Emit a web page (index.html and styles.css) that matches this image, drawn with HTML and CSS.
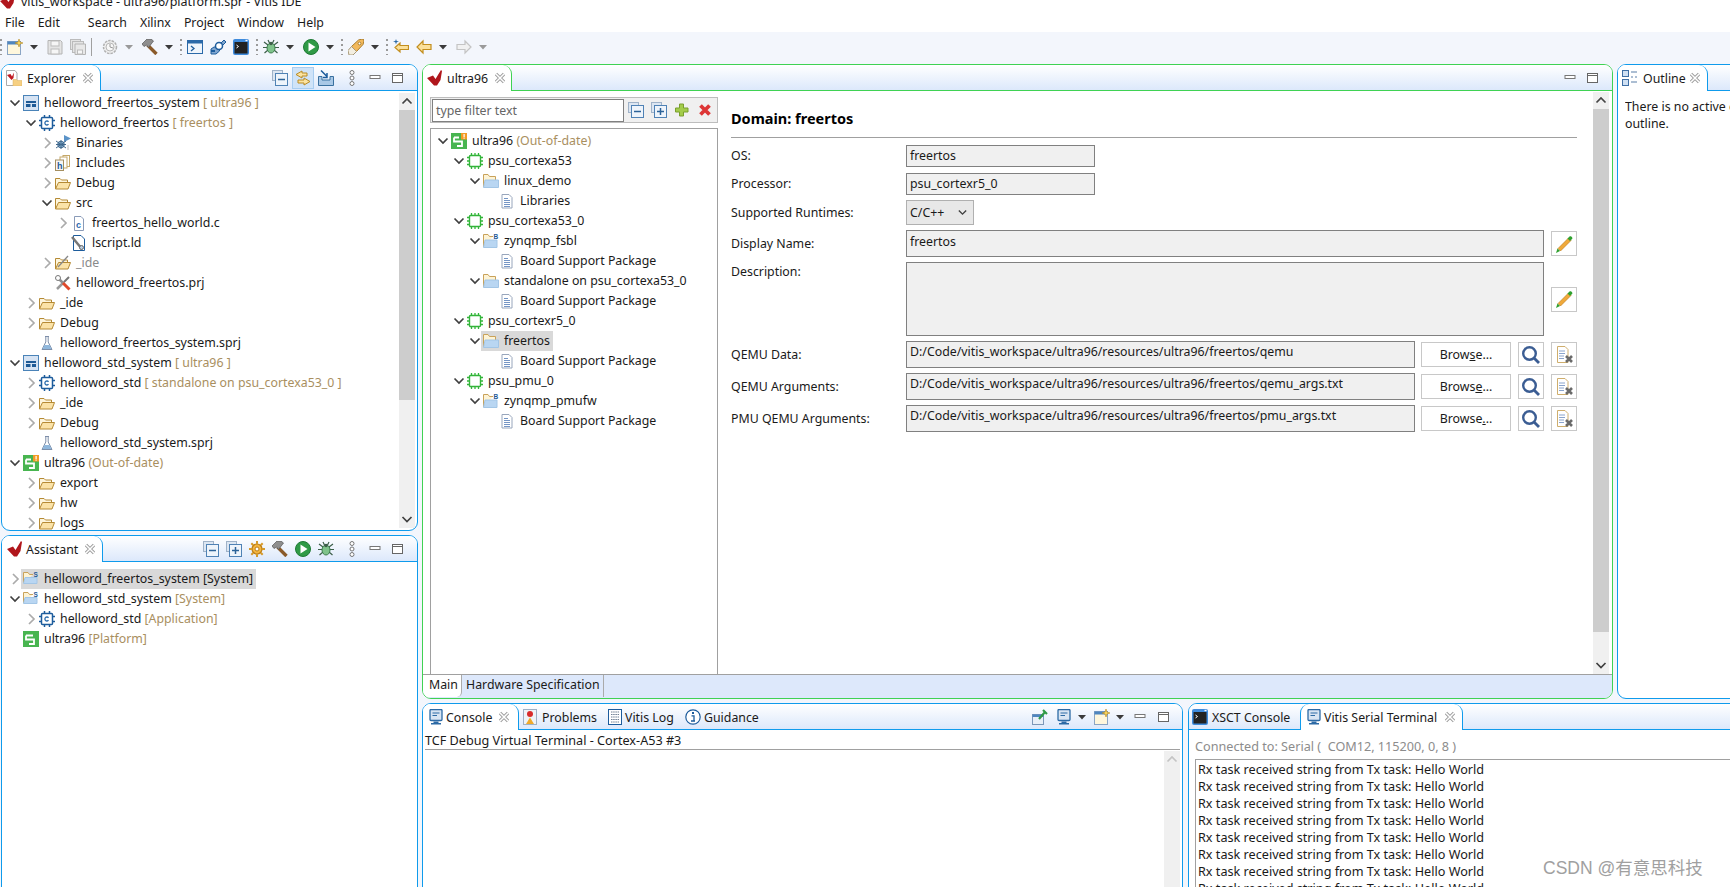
FILE: index.html
```html
<!DOCTYPE html>
<html lang="en">
<head>
<meta charset="utf-8">
<title>vitis_workspace - ultra96/platform.spr - Vitis IDE</title>
<link rel="stylesheet" href="styles.css">
</head>
<body>
<svg class="defs" xmlns="http://www.w3.org/2000/svg">
  <symbol id="logo" viewBox="0 0 16 16"><path d="M0 8 6 5.500 8.500 9 14 0 15 1 13.500 10 10 15.500 7 15.500Z" fill="#b0161c"/></symbol>
  <symbol id="cd" viewBox="0 0 16 16"><path d="M3.500 5.500 8 10 12.500 5.500" fill="none" stroke="#404040" stroke-width="1.700"/></symbol>
  <symbol id="cr" viewBox="0 0 16 16"><path d="M6 3 11 8 6 13" fill="none" stroke="#ababab" stroke-width="1.700"/></symbol>
  <symbol id="sys" viewBox="0 0 16 16"><rect x=".5" y=".5" width="15" height="15" fill="#d6e3f3" stroke="#4a83b8"/><rect x="3" y="6" width="10" height="2" fill="#1e5a96"/><rect x="3" y="9" width="4.500" height="3" fill="#1e5a96"/><rect x="9" y="9" width="4" height="3" fill="#1e5a96"/></symbol>
  <symbol id="app" viewBox="0 0 16 16"><rect x="2.500" y="2.500" width="11" height="11" rx="1" fill="#fff" stroke="#1d5c9c" stroke-width="1.500"/><path d="M5.500 0v3M10.500 0v3M5.500 13v3M10.500 13v3M0 5.500h3M0 10.500h3M13 5.500h3M13 10.500h3" stroke="#1d5c9c" stroke-width="1.500"/><path d="M9.500 6.800A2 2 0 1 0 9.500 9.200" fill="none" stroke="#2f6fae" stroke-width="1.300"/></symbol>
  <symbol id="bin" viewBox="0 0 16 16"><path d="M9 0 16 3.500 9 7Z" fill="#5b93c8"/><circle cx="6" cy="9.500" r="3.300" fill="#8fb7d8" stroke="#41688c"/><path d="M1 6 11 13M1 13 11 6M1 9.500h10M6 5v9" stroke="#41688c"/><path d="M13 10v5" stroke="#bbb"/></symbol>
  <symbol id="inc" viewBox="0 0 16 16"><rect x="8" y=".5" width="6.500" height="11" fill="#fff" stroke="#c5a869"/><rect x="5" y="2" width="7" height="11" fill="#fff" stroke="#c5a869"/><rect x=".5" y="5" width="8" height="10.500" fill="#f6f6f6" stroke="#a58f60"/><text x="2" y="14" font-size="9" font-weight="700" font-family="Liberation Sans" fill="#1e5a96">h</text></symbol>
  <symbol id="fo" viewBox="0 0 16 16"><path d="M.5 14V3.500H5L6.500 5H12.500V7.500" fill="#fdf5dc" stroke="#b58a35"/><path d="M.5 14 3.500 7.500H15.500L13 14Z" fill="#fbe3a8" stroke="#b58a35"/></symbol>
  <symbol id="fx" viewBox="0 0 16 16"><path d="M.5 14V3.500H5L6.500 5H12.500V7.500" fill="#fdf5dc" stroke="#b58a35"/><path d="M.5 14 3.500 7.500H15.500L13 14Z" fill="#fbe3a8" stroke="#b58a35"/><path d="M3 12 13 1" stroke="#888" stroke-width="1.300"/></symbol>
  <symbol id="fb" viewBox="0 0 16 16"><path d="M.5 14V1.500H5L6.500 3.500H12.500V7" fill="#fdf3d5" stroke="#c9a25a"/><path d="M.5 14.500 2 7H15.500V14.500Z" fill="#b9d6f2" stroke="#a3c6e6"/></symbol>
  <symbol id="fbb" viewBox="0 0 16 16"><path d="M.5 14V1.500H5L6.500 3.500H10" fill="#fdf3d5" stroke="#c9a25a"/><path d="M.5 14.500 2 7H14V14.500Z" fill="#b9d6f2" stroke="#a3c6e6"/><text x="10.500" y="6" font-size="6.500" font-weight="700" font-family="Liberation Sans" fill="#1e5a96">B</text></symbol>
  <symbol id="fbs" viewBox="0 0 16 16"><path d="M.5 12V1.500H5L6.500 3.500H10" fill="#fdf3d5" stroke="#c9a25a"/><path d="M.5 12.500 2 6.500H14V12.500Z" fill="#b9d6f2" stroke="#a3c6e6"/><text x="10.500" y="6" font-size="6.500" font-weight="700" font-family="Liberation Sans" fill="#1e5a96">S</text></symbol>
  <symbol id="cfile" viewBox="0 0 16 16"><path d="M3.500 1.500H10L12.500 4V15.500H3.500Z" fill="#fff" stroke="#8a9bb8"/><text x="5" y="13" font-size="9" font-weight="700" font-family="Liberation Sans" fill="#2b6bb0">c</text></symbol>
  <symbol id="ld" viewBox="0 0 16 16"><path d="M2.500 .5H10L13.500 4V15.500H2.500Z" fill="#fff" stroke="#1d5c9c"/><path d="M1 2 11 14" stroke="#777" stroke-width="2.500"/><circle cx="10.500" cy="12.500" r="2" fill="#bcd" stroke="#666"/></symbol>
  <symbol id="prj" viewBox="0 0 16 16"><path d="M2 14 9 7" stroke="#9a9a9a" stroke-width="2.500"/><path d="M9 7 14 2" stroke="#777" stroke-width="2"/><path d="M2 2 8 8" stroke="#8f8f8f" stroke-width="2.500"/><circle cx="3" cy="3" r="2.500" fill="#fff" stroke="#777"/><path d="M8 8 14.500 14.500" stroke="#e0492a" stroke-width="3"/></symbol>
  <symbol id="flask" viewBox="0 0 16 16"><path d="M6 1.500H10M6.800 1.500V7L3 14.500H13L9.200 7V1.500" fill="#fff" stroke="#7d8ea8"/><path d="M5.500 10H10.500L12.500 14H3.500Z" fill="#8fb7dc"/></symbol>
  <symbol id="plat" viewBox="0 0 16 16"><rect width="16" height="16" fill="#48b550"/><path d="M3 4.500H10M3 4.500V8.500H11V13H6" fill="none" stroke="#fff" stroke-width="1.800"/></symbol>
  <symbol id="platw" viewBox="0 0 16 16"><rect width="16" height="16" fill="#48b550"/><path d="M3 4.500H8M3 4.500V8.500H11V13H6" fill="none" stroke="#fff" stroke-width="1.800"/><rect x="10" y="0" width="6" height="6.500" fill="#f39a25"/><rect x="12.500" y="1" width="1.200" height="3" fill="#fff"/><rect x="12.500" y="4.500" width="1.200" height="1.200" fill="#fff"/></symbol>
  <symbol id="cpu" viewBox="0 0 16 16"><rect x="2.500" y="2.500" width="11" height="11" rx="1" fill="#fff" stroke="#33b53a" stroke-width="1.400"/><path d="M4.500 0v2.500M8 0v2.500M11.500 0v2.500M4.500 13.500V16M8 13.500V16M11.500 13.500V16M0 4.500h2.500M0 8h2.500M0 11.500h2.500M13.500 4.500H16M13.500 8H16M13.500 11.500H16" stroke="#33b53a" stroke-width="1.300"/></symbol>
  <symbol id="doc" viewBox="0 0 16 16"><path d="M3 1.500H10L13 4.500V15H3Z" fill="#fff" stroke="#98a6bc"/><path d="M5 5.500H9M5 7.500H11M5 9.500H11M5 11.500H11M5 13.500H11" stroke="#7595c4"/></symbol>
  <symbol id="x" viewBox="0 0 12 12"><path d="M2 2 10 10M10 2 2 10" stroke="#9d9d9d" stroke-width="3.200"/><path d="M2 2 10 10M10 2 2 10" stroke="#fff" stroke-width="1.500"/></symbol>
  <symbol id="exp" viewBox="0 0 16 16"><path d="M.5 .5H9L11 3V15.500H.5Z" fill="#fff" stroke="#aaa"/><path d="M1 5 4.500 4 6 6.500 8 2.500 7.500 8 5.500 10Z" fill="#c01a20"/><path d="M7 9.500H10.500L11.500 10.500H16V16H7Z" fill="#f6d083" stroke="#d9b162" stroke-width=".5"/></symbol>
  <symbol id="col" viewBox="0 0 16 16"><rect x=".5" y=".5" width="10" height="10" fill="#dce6f2" stroke="#9fb2c8"/><rect x="3.500" y="3.500" width="12" height="12" fill="#eef4fb" stroke="#4f82b5"/><path d="M6 9.500H13" stroke="#2c6399" stroke-width="1.500"/></symbol>
  <symbol id="ex" viewBox="0 0 16 16"><rect x=".5" y=".5" width="10" height="10" fill="#dce6f2" stroke="#9fb2c8"/><rect x="3.500" y="3.500" width="12" height="12" fill="#eef4fb" stroke="#4f82b5"/><path d="M6 9.500H13M9.500 6V13" stroke="#2c6399" stroke-width="1.500"/></symbol>
  <symbol id="link" viewBox="0 0 16 16"><path d="M7 1 1 4.500 7 8V6H12V3H7Z" fill="#fbe3a0" stroke="#b98a22"/><path d="M9 8 15 11.500 9 15V13H3V10H9Z" fill="#fbe3a0" stroke="#b98a22"/></symbol>
  <symbol id="tray" viewBox="0 0 16 16"><path d="M.5 6.500V15.500H15.500V6.500H12V10H4V6.500Z" fill="#a9c8e6" stroke="#39709f"/><path d="M3 .5 9 6.500M9 3V7.500H5" fill="none" stroke="#1d5c9c" stroke-width="1.500"/></symbol>
  <symbol id="dots" viewBox="0 0 16 16"><circle cx="8" cy="2.500" r="2" fill="#fff" stroke="#777"/><circle cx="8" cy="8" r="2" fill="#fff" stroke="#777"/><circle cx="8" cy="13.500" r="2" fill="#fff" stroke="#777"/></symbol>
  <symbol id="min" viewBox="0 0 16 16"><rect x="3" y="5.500" width="10" height="3" fill="#fff" stroke="#777"/></symbol>
  <symbol id="max" viewBox="0 0 16 16"><rect x="2.500" y="3.500" width="10" height="9" fill="#fff" stroke="#666"/><path d="M2.500 5.500H12.500" stroke="#666"/></symbol>
  <symbol id="gear" viewBox="0 0 16 16"><circle cx="8" cy="8" r="5" fill="#f5b63f" stroke="#b97c17" stroke-width="1.200"/><circle cx="8" cy="8" r="2" fill="#fff" stroke="#b97c17"/><path d="M8 0v3M8 13v3M0 8h3M13 8h3M2.300 2.300l2 2M11.700 11.700l2 2M2.300 13.700l2-2M11.700 4.300l2-2" stroke="#d69a2b" stroke-width="2"/></symbol>
  <symbol id="hammer" viewBox="0 0 16 16"><path d="M5.500 6 14.500 15" stroke="#8a5a2a" stroke-width="3.400"/><path d="M0 5 5 0H9L11.500 2 6.500 8.500 4.500 6 2 7.500Z" fill="#8e8e8e" stroke="#555" stroke-width=".7"/></symbol>
  <symbol id="run" viewBox="0 0 16 16"><circle cx="8" cy="8" r="7.500" fill="#2f9a46" stroke="#1f7a35"/><path d="M5.500 3.500 12.500 8 5.500 12.500Z" fill="#fff"/></symbol>
  <symbol id="bug" viewBox="0 0 16 16"><path d="M1 3 5 6M15 3 11 6M0 8.500H4M16 8.500H12M1.500 14 5 11M14.500 14 11 11M5 1 6.500 4M11 1 9.500 4" stroke="#3d5f4a" stroke-width="1.200"/><ellipse cx="8" cy="9" rx="4" ry="5" fill="#7fc38b" stroke="#3a7a4a"/><circle cx="8" cy="4.500" r="1.800" fill="#3d5f4a"/></symbol>
  <symbol id="plus" viewBox="0 0 16 16"><path d="M5.500 2H9.500V6H14V10H9.500V14H5.500V10H1.500V6H5.500Z" fill="#a3cc4a" stroke="#7a9f2e"/></symbol>
  <symbol id="del" viewBox="0 0 16 16"><path d="M3.500 3.500 12.500 12.500M12.500 3.500 3.500 12.500" stroke="#dd3636" stroke-width="3.800"/></symbol>
  <symbol id="pencil" viewBox="0 0 20 20"><path d="M4 14.500 14.500 4 17 6.500 6.500 17Z" fill="#f0a93a" stroke="#b9751a" stroke-width=".6"/><path d="M13.500 4.500 15.500 2.500C16 2 16.700 2 17.300 2.500L18 3.200C18.500 3.800 18.500 4.500 18 5L16 7Z" fill="#2fa12f"/><path d="M2 19 3.500 14.500 6 17Z" fill="#2fa12f"/></symbol>
  <symbol id="mag" viewBox="0 0 20 20"><circle cx="8.500" cy="8.500" r="6.300" fill="#fff" stroke="#3b5d93" stroke-width="2.400"/><path d="M13 13 18 18" stroke="#3b5d93" stroke-width="2.800"/></symbol>
  <symbol id="clr" viewBox="0 0 20 20"><path d="M3.500 1.500H11L14 4.500V17.500H3.500Z" fill="#fff" stroke="#cfae6d"/><path d="M5 6H11M5 8.500H11M5 11H10M5 13.500H10" stroke="#8aa4cc"/><path d="M12 11 18 17M18 11 12 17" stroke="#6a6a6a" stroke-width="2.600"/></symbol>
  <symbol id="outl" viewBox="0 0 16 16"><rect x=".5" y=".5" width="6" height="6" fill="#cfe0f3" stroke="#3f6fa5"/><rect x=".5" y="9.500" width="6" height="6" fill="#cfe0f3" stroke="#3f6fa5"/><path d="M9 2H15M9 7H11M13 7H15M9 12H15" stroke="#5a7ea8" stroke-width="1.200"/></symbol>
  <symbol id="mon" viewBox="0 0 16 16"><rect x="2" y=".5" width="12" height="11" rx="1" fill="#d8e5f3" stroke="#2c6aa5" stroke-width="1.300"/><path d="M4.500 4H11.500M4.500 6.500H9" stroke="#2c6aa5"/><path d="M5.500 12.500H10.500V14H13V15.500H3V14H5.500Z" fill="#2c6aa5"/></symbol>
  <symbol id="prob" viewBox="0 0 16 16"><rect x="1.500" y=".5" width="13" height="15" fill="#eef2f7" stroke="#9fb0c4"/><circle cx="8" cy="5" r="3" fill="#d82b2b"/><path d="M8 8.500 12 15H4Z" fill="#f0a92a"/></symbol>
  <symbol id="log" viewBox="0 0 16 16"><rect x="1.500" y=".5" width="13" height="15" fill="#fff" stroke="#1d5c9c"/><path d="M4 3H12M4 5.500H12M4 8H12M4 10.500H12M4 13H12" stroke="#6f7f92" stroke-dasharray="1.500 .7"/></symbol>
  <symbol id="info" viewBox="0 0 16 16"><circle cx="8" cy="8" r="7.200" fill="#fff" stroke="#1d5c9c" stroke-width="1.200"/><rect x="7" y="3" width="2" height="2" fill="#1d5c9c"/><path d="M6.500 6.800H9V12H10M6 12H10" fill="none" stroke="#1d5c9c" stroke-width="1.300"/></symbol>
  <symbol id="pin" viewBox="0 0 16 16"><rect x=".5" y="5.500" width="11" height="10" fill="#e8eff8" stroke="#7c97b8"/><rect x=".5" y="5.500" width="11" height="2.500" fill="#4f86bf"/><path d="M7 10 13 3M11 1 15 5" stroke="#2f9a46" stroke-width="2.200"/></symbol>
  <symbol id="new" viewBox="0 0 16 16"><rect x=".5" y="2.500" width="13" height="13" fill="#fff7dc" stroke="#8ba5c4"/><rect x=".5" y="2.500" width="13" height="3" fill="#4f86bf"/><path d="M12 0 13 3 16 4 13 5 12 8 11 5 8 4 11 3Z" fill="#f7d25a" stroke="#b58a22" stroke-width=".6"/></symbol>
  <symbol id="save" viewBox="0 0 16 16"><path d="M1 1.500H13.500L15 3V15H1Z" fill="#e4e4e4" stroke="#b4b4b4"/><rect x="4" y="2" width="8" height="5" fill="#f6f6f6" stroke="#bbb"/><rect x="4" y="10" width="8" height="5" fill="#f6f6f6" stroke="#bbb"/></symbol>
  <symbol id="saveall" viewBox="0 0 16 16"><rect x=".5" y=".5" width="10" height="10" fill="#e4e4e4" stroke="#bbb"/><rect x="2.500" y="2.500" width="11" height="11" fill="#e4e4e4" stroke="#bbb"/><path d="M5 5H15.500V15.500H5Z" fill="#e8e8e8" stroke="#b4b4b4"/><rect x="7.500" y="11" width="5" height="4" fill="#f6f6f6" stroke="#bbb"/></symbol>
  <symbol id="gearg" viewBox="0 0 16 16"><circle cx="8" cy="8" r="6.500" fill="#eee" stroke="#b0b0b0" stroke-width="1.500" stroke-dasharray="2.500 1"/><circle cx="8" cy="8" r="4" fill="#f7f7f7" stroke="#b8b8b8"/><path d="M8 5V8L11 9" fill="none" stroke="#999"/></symbol>
  <symbol id="xs" viewBox="0 0 16 16"><rect x=".5" y="1.500" width="15" height="13" fill="#eef4fb" stroke="#2a69a8"/><rect x=".5" y="1.500" width="15" height="3" fill="#2a69a8"/><path d="M4 7 7 9.500 4 12" fill="none" stroke="#1d5c9c" stroke-width="1.300"/></symbol>
  <symbol id="conn" viewBox="0 0 16 16"><path d="M1 15V10L4 8H7L14 1 16 3 9.500 9.500V12L6 15Z" fill="#7fa5cf" stroke="#1d5c9c"/><circle cx="9" cy="7" r="3.500" fill="#fff" stroke="#1d5c9c" stroke-width="1.500"/><path d="M1 12H5" stroke="#1d5c9c" stroke-width="2"/></symbol>
  <symbol id="term" viewBox="0 0 16 16"><rect width="16" height="16" rx="2" fill="#3f8bdc"/><rect x="1.500" y="3" width="13" height="11.500" fill="#222"/><path d="M3.500 6 5.500 7.500 3.500 9" fill="none" stroke="#fff"/><rect x="12.500" y=".8" width="2" height="1.400" fill="#fff"/></symbol>
  <symbol id="rocket" viewBox="0 0 16 16"><path d="M3.500 7.500 10.500 1C12 .3 14.500 0 16 0 16 1.500 15.700 4 15 5.500L8.500 12.500Z" fill="#f2b95c" stroke="#a97c2c"/><path d="M3.500 7.500 8.500 12.500 5 16 1 16 0 11.500Z" fill="#f3eee0" stroke="#a89a7a"/><circle cx="11.500" cy="4.500" r="1.400" fill="#fff" stroke="#a97c2c"/></symbol>
  <symbol id="back" viewBox="0 0 16 16"><path d="M7 2 1 8 7 14V10.500H15V5.500H7Z" fill="#fbe09a" stroke="#c28e1e" stroke-width="1.200"/></symbol>
  <symbol id="backs" viewBox="0 0 16 16"><path d="M7 4 2 8.500 7 13V10.500H15.500V6.500H7Z" fill="#fbe09a" stroke="#c28e1e" stroke-width="1.200"/><path d="M3 0 3.700 2 6 2.500 3.700 3.200 3 5.500 2.300 3.200 0 2.500 2.300 2Z" fill="#2c6aa5"/></symbol>
  <symbol id="fwd" viewBox="0 0 16 16"><path d="M9 2 15 8 9 14V10.500H1V5.500H9Z" fill="#f1f1f1" stroke="#c4c4c4" stroke-width="1.200"/></symbol>
  <symbol id="drop" viewBox="0 0 8 8"><path d="M0 2H8L4 6.500Z" fill="#3a3a3a"/></symbol>
  <symbol id="dropg" viewBox="0 0 8 8"><path d="M0 2H8L4 6.500Z" fill="#9a9a9a"/></symbol>
  <symbol id="su" viewBox="0 0 16 16"><path d="M3.500 10 8 5.500 12.500 10" fill="none" stroke="#444" stroke-width="1.700"/></symbol>
  <symbol id="sug" viewBox="0 0 16 16"><path d="M3.500 10 8 5.500 12.500 10" fill="none" stroke="#c4c4c4" stroke-width="1.700"/></symbol>
</svg>

<header class="titlebar"><svg class="tlogo"><use href="#logo"/></svg><span>vitis_workspace - ultra96/platform.spr - Vitis IDE</span></header>
<nav class="menubar">
  <span>File</span><span class="after-gap">Edit</span><span>Search</span><span>Xilinx</span><span>Project</span><span>Window</span><span>Help</span>
</nav>
<div class="toolbar">
  <i class="tg"></i>
  <svg class="ti"><use href="#new"/></svg><svg class="ta"><use href="#drop"/></svg>
  <svg class="ti"><use href="#save"/></svg><svg class="ti"><use href="#saveall"/></svg><i class="ts"></i>
  <svg class="ti"><use href="#gearg"/></svg><svg class="ta"><use href="#dropg"/></svg>
  <svg class="ti"><use href="#hammer"/></svg><svg class="ta"><use href="#drop"/></svg><i class="tg"></i>
  <svg class="ti"><use href="#xs"/></svg><svg class="ti"><use href="#conn"/></svg><svg class="ti"><use href="#term"/></svg><i class="tg"></i>
  <svg class="ti"><use href="#bug"/></svg><svg class="ta"><use href="#drop"/></svg>
  <svg class="ti"><use href="#run"/></svg><svg class="ta"><use href="#drop"/></svg><i class="tg"></i>
  <svg class="ti"><use href="#rocket"/></svg><svg class="ta"><use href="#drop"/></svg><i class="tg"></i>
  <svg class="ti"><use href="#backs"/></svg><svg class="ti"><use href="#back"/></svg><svg class="ta"><use href="#drop"/></svg>
  <svg class="ti"><use href="#fwd"/></svg><svg class="ta"><use href="#dropg"/></svg>
</div>

<main class="workspace">
  <div class="leftcol">
    <section class="panel explorer">
      <div class="phead">
        <div class="ptab tab-explorer"><svg class="ic"><use href="#exp"/></svg><span>Explorer</span><svg class="cl"><use href="#x"/></svg></div>
        <div class="ptools">
          <svg class="ic"><use href="#col"/></svg><span class="toggled"><svg class="ic"><use href="#link"/></svg></span><svg class="ic"><use href="#tray"/></svg><svg class="ic menu-dots"><use href="#dots"/></svg><svg class="ic"><use href="#min"/></svg><svg class="ic"><use href="#max"/></svg>
        </div>
      </div>
      <div class="pbody">
        <div class="tree tree-exp">
          <div class="row l0"><svg class="cv"><use href="#cd"/></svg><svg class="ic"><use href="#sys"/></svg><span class="t">helloword_freertos_system <em>[ ultra96 ]</em></span></div>
          <div class="row l1"><svg class="cv"><use href="#cd"/></svg><svg class="ic"><use href="#app"/></svg><span class="t">helloword_freertos <em>[ freertos ]</em></span></div>
          <div class="row l2"><svg class="cv"><use href="#cr"/></svg><svg class="ic"><use href="#bin"/></svg><span class="t">Binaries</span></div>
          <div class="row l2"><svg class="cv"><use href="#cr"/></svg><svg class="ic"><use href="#inc"/></svg><span class="t">Includes</span></div>
          <div class="row l2"><svg class="cv"><use href="#cr"/></svg><svg class="ic"><use href="#fo"/></svg><span class="t">Debug</span></div>
          <div class="row l2"><svg class="cv"><use href="#cd"/></svg><svg class="ic"><use href="#fo"/></svg><span class="t">src</span></div>
          <div class="row l3"><svg class="cv"><use href="#cr"/></svg><svg class="ic"><use href="#cfile"/></svg><span class="t">freertos_hello_world.c</span></div>
          <div class="row l3"><span class="cv"></span><svg class="ic"><use href="#ld"/></svg><span class="t">lscript.ld</span></div>
          <div class="row l2"><svg class="cv"><use href="#cr"/></svg><svg class="ic"><use href="#fx"/></svg><span class="t muted">_ide</span></div>
          <div class="row l2"><span class="cv"></span><svg class="ic"><use href="#prj"/></svg><span class="t">helloword_freertos.prj</span></div>
          <div class="row l1"><svg class="cv"><use href="#cr"/></svg><svg class="ic"><use href="#fo"/></svg><span class="t">_ide</span></div>
          <div class="row l1"><svg class="cv"><use href="#cr"/></svg><svg class="ic"><use href="#fo"/></svg><span class="t">Debug</span></div>
          <div class="row l1"><span class="cv"></span><svg class="ic"><use href="#flask"/></svg><span class="t">helloword_freertos_system.sprj</span></div>
          <div class="row l0"><svg class="cv"><use href="#cd"/></svg><svg class="ic"><use href="#sys"/></svg><span class="t">helloword_std_system <em>[ ultra96 ]</em></span></div>
          <div class="row l1"><svg class="cv"><use href="#cr"/></svg><svg class="ic"><use href="#app"/></svg><span class="t">helloword_std <em>[ standalone on psu_cortexa53_0 ]</em></span></div>
          <div class="row l1"><svg class="cv"><use href="#cr"/></svg><svg class="ic"><use href="#fo"/></svg><span class="t">_ide</span></div>
          <div class="row l1"><svg class="cv"><use href="#cr"/></svg><svg class="ic"><use href="#fo"/></svg><span class="t">Debug</span></div>
          <div class="row l1"><span class="cv"></span><svg class="ic"><use href="#flask"/></svg><span class="t">helloword_std_system.sprj</span></div>
          <div class="row l0"><svg class="cv"><use href="#cd"/></svg><svg class="ic"><use href="#platw"/></svg><span class="t">ultra96 <em>(Out-of-date)</em></span></div>
          <div class="row l1"><svg class="cv"><use href="#cr"/></svg><svg class="ic"><use href="#fo"/></svg><span class="t">export</span></div>
          <div class="row l1"><svg class="cv"><use href="#cr"/></svg><svg class="ic"><use href="#fo"/></svg><span class="t">hw</span></div>
          <div class="row l1"><svg class="cv"><use href="#cr"/></svg><svg class="ic"><use href="#fo"/></svg><span class="t">logs</span></div>
        </div>
        <div class="sbar sbar-exp"><svg class="sb"><use href="#su"/></svg><div class="thumb thumb-exp"></div><div class="track"></div><svg class="sb"><use href="#cd"/></svg></div>
      </div>
    </section>

    <section class="panel assistant">
      <div class="phead">
        <div class="ptab tab-assistant"><svg class="ic"><use href="#logo"/></svg><span>Assistant</span><svg class="cl"><use href="#x"/></svg></div>
        <div class="ptools">
          <svg class="ic"><use href="#col"/></svg><svg class="ic"><use href="#ex"/></svg><svg class="ic"><use href="#gear"/></svg><svg class="ic"><use href="#hammer"/></svg><svg class="ic"><use href="#run"/></svg><svg class="ic"><use href="#bug"/></svg><svg class="ic menu-dots"><use href="#dots"/></svg><svg class="ic"><use href="#min"/></svg><svg class="ic"><use href="#max"/></svg>
        </div>
      </div>
      <div class="tree tree-asst">
        <div class="row l0"><svg class="cv"><use href="#cr"/></svg><span class="sel"><svg class="ic"><use href="#fbs"/></svg><span class="t">helloword_freertos_system [System]</span></span></div>
        <div class="row l0"><svg class="cv"><use href="#cd"/></svg><svg class="ic"><use href="#fbs"/></svg><span class="t">helloword_std_system <em>[System]</em></span></div>
        <div class="row l1"><svg class="cv"><use href="#cr"/></svg><svg class="ic"><use href="#app"/></svg><span class="t">helloword_std <em>[Application]</em></span></div>
        <div class="row l0"><span class="cv"></span><svg class="ic"><use href="#plat"/></svg><span class="t">ultra96 <em>[Platform]</em></span></div>
      </div>
    </section>
  </div>

  <div class="rightcol">
    <div class="toprow">
      <section class="panel editor green">
        <div class="phead">
          <div class="ptab tab-ultra"><svg class="ic"><use href="#logo"/></svg><span>ultra96</span><svg class="cl"><use href="#x"/></svg></div>
          <div class="ptools"><svg class="ic"><use href="#min"/></svg><svg class="ic"><use href="#max"/></svg></div>
        </div>
        <div class="edbody">
          <div class="sidecol">
            <div class="filter">
              <div class="finput">type filter text</div>
              <div class="fbtns"><svg class="ic"><use href="#col"/></svg><svg class="ic"><use href="#ex"/></svg><svg class="ic"><use href="#plus"/></svg><svg class="ic"><use href="#del"/></svg></div>
            </div>
            <div class="tree tree-dom">
              <div class="row l0"><svg class="cv"><use href="#cd"/></svg><svg class="ic"><use href="#platw"/></svg><span class="t">ultra96 <em>(Out-of-date)</em></span></div>
              <div class="row l1"><svg class="cv"><use href="#cd"/></svg><svg class="ic"><use href="#cpu"/></svg><span class="t">psu_cortexa53</span></div>
              <div class="row l2"><svg class="cv"><use href="#cd"/></svg><svg class="ic"><use href="#fb"/></svg><span class="t">linux_demo</span></div>
              <div class="row l3"><span class="cv"></span><svg class="ic"><use href="#doc"/></svg><span class="t">Libraries</span></div>
              <div class="row l1"><svg class="cv"><use href="#cd"/></svg><svg class="ic"><use href="#cpu"/></svg><span class="t">psu_cortexa53_0</span></div>
              <div class="row l2"><svg class="cv"><use href="#cd"/></svg><svg class="ic"><use href="#fbb"/></svg><span class="t">zynqmp_fsbl</span></div>
              <div class="row l3"><span class="cv"></span><svg class="ic"><use href="#doc"/></svg><span class="t">Board Support Package</span></div>
              <div class="row l2"><svg class="cv"><use href="#cd"/></svg><svg class="ic"><use href="#fb"/></svg><span class="t">standalone on psu_cortexa53_0</span></div>
              <div class="row l3"><span class="cv"></span><svg class="ic"><use href="#doc"/></svg><span class="t">Board Support Package</span></div>
              <div class="row l1"><svg class="cv"><use href="#cd"/></svg><svg class="ic"><use href="#cpu"/></svg><span class="t">psu_cortexr5_0</span></div>
              <div class="row l2"><svg class="cv"><use href="#cd"/></svg><span class="sel"><svg class="ic"><use href="#fb"/></svg><span class="t">freertos</span></span></div>
              <div class="row l3"><span class="cv"></span><svg class="ic"><use href="#doc"/></svg><span class="t">Board Support Package</span></div>
              <div class="row l1"><svg class="cv"><use href="#cd"/></svg><svg class="ic"><use href="#cpu"/></svg><span class="t">psu_pmu_0</span></div>
              <div class="row l2"><svg class="cv"><use href="#cd"/></svg><svg class="ic"><use href="#fbb"/></svg><span class="t">zynqmp_pmufw</span></div>
              <div class="row l3"><span class="cv"></span><svg class="ic"><use href="#doc"/></svg><span class="t">Board Support Package</span></div>
            </div>
          </div>
          <div class="formcol">
            <div class="form">
              <h2 class="fhead">Domain: freertos</h2>
              <div class="frow r-short"><label>OS:</label><div class="fld fld-s">freertos</div></div>
              <div class="frow r-short"><label>Processor:</label><div class="fld fld-s">psu_cortexr5_0</div></div>
              <div class="frow r-sel"><label>Supported Runtimes:</label><div class="fsel">C/C++<svg class="sel-ch"><use href="#cd"/></svg></div></div>
              <div class="frow r-tall"><label>Display Name:</label><div class="fld fld-g">freertos</div><span class="ibtn"><svg class="bi"><use href="#pencil"/></svg></span></div>
              <div class="frow r-desc"><label>Description:</label><div class="fld fld-g fld-a"></div><span class="ibtn"><svg class="bi"><use href="#pencil"/></svg></span></div>
              <div class="frow r-tall"><label>QEMU Data:</label><div class="fld fld-g fld-p">D:/Code/vitis_workspace/ultra96/resources/ultra96/freertos/qemu</div><span class="browse">Brow<u>s</u>e...</span><span class="ibtn"><svg class="bi"><use href="#mag"/></svg></span><span class="ibtn"><svg class="bi"><use href="#clr"/></svg></span></div>
              <div class="frow r-tall"><label>QEMU Arguments:</label><div class="fld fld-g fld-p">D:/Code/vitis_workspace/ultra96/resources/ultra96/freertos/qemu_args.txt</div><span class="browse">Brows<u>e</u>...</span><span class="ibtn"><svg class="bi"><use href="#mag"/></svg></span><span class="ibtn"><svg class="bi"><use href="#clr"/></svg></span></div>
              <div class="frow r-tall"><label>PMU QEMU Arguments:</label><div class="fld fld-g fld-p">D:/Code/vitis_workspace/ultra96/resources/ultra96/freertos/pmu_args.txt</div><span class="browse">Browse<u>.</u>..</span><span class="ibtn"><svg class="bi"><use href="#mag"/></svg></span><span class="ibtn"><svg class="bi"><use href="#clr"/></svg></span></div>
            </div>
            <div class="sbar sbar-form"><svg class="sb"><use href="#su"/></svg><div class="thumb thumb-form"></div><div class="track"></div><svg class="sb"><use href="#cd"/></svg></div>
          </div>
        </div>
        <div class="edtabs"><span class="etab etab-on">Main</span><span class="etab etab-hw">Hardware Specification</span></div>
      </section>

      <section class="panel outline">
        <div class="phead">
          <div class="ptab tab-outline"><svg class="ic"><use href="#outl"/></svg><span>Outline</span><svg class="cl"><use href="#x"/></svg></div>
        </div>
        <p class="nooutline">There is no active editor that provides an<br>outline.</p>
      </section>
    </div>

    <div class="botrow">
      <section class="panel console">
        <div class="phead">
          <div class="ptab tab-console"><svg class="ic"><use href="#mon"/></svg><span>Console</span><svg class="cl"><use href="#x"/></svg></div>
          <div class="itab tab-problems"><svg class="ic"><use href="#prob"/></svg><span>Problems</span></div>
          <div class="itab tab-log"><svg class="ic"><use href="#log"/></svg><span>Vitis Log</span></div>
          <div class="itab tab-guide"><svg class="ic"><use href="#info"/></svg><span>Guidance</span></div>
          <div class="ptools ptools-c"><svg class="ic"><use href="#pin"/></svg><svg class="ic"><use href="#mon"/></svg><svg class="ta"><use href="#drop"/></svg><svg class="ic"><use href="#new"/></svg><svg class="ta"><use href="#drop"/></svg><svg class="ic"><use href="#min"/></svg><svg class="ic"><use href="#max"/></svg></div>
        </div>
        <div class="contitle">TCF Debug Virtual Terminal - Cortex-A53 #3</div>
        <div class="conbody"><div class="sbar sbar-con"><svg class="sb"><use href="#sug"/></svg></div></div>
      </section>

      <section class="panel terminal">
        <div class="phead">
          <div class="itab tab-xsct"><svg class="ic"><use href="#term"/></svg><span>XSCT Console</span></div>
          <div class="ptab tab-serial"><svg class="ic"><use href="#mon"/></svg><span>Vitis Serial Terminal</span><svg class="cl"><use href="#x"/></svg></div>
        </div>
        <div class="connected">Connected to: Serial (&nbsp; COM12, 115200, 0, 8 )</div>
        <div class="termbox">
          <div>Rx task received string from Tx task: Hello World</div>
          <div>Rx task received string from Tx task: Hello World</div>
          <div>Rx task received string from Tx task: Hello World</div>
          <div>Rx task received string from Tx task: Hello World</div>
          <div>Rx task received string from Tx task: Hello World</div>
          <div>Rx task received string from Tx task: Hello World</div>
          <div>Rx task received string from Tx task: Hello World</div>
          <div>Rx task received string from Tx task: Hello World</div>
        </div>
      </section>
    </div>
  </div>
</main>
<div class="watermark">CSDN @有意思科技</div>
</body>
</html>
```
FILE: styles.css
```css
* { box-sizing: border-box; }
html, body { margin: 0; padding: 0; height: 887px; overflow: hidden; }
body {
  position: relative;
  width: 1730px;
  background: #f3f6fc;
  color: #1a1a1a;
  font: 12.350px/20px "Noto Sans", "Liberation Sans", sans-serif;
}
.defs { display: none; }
svg { display: block; flex: none; }

/* window chrome */
.titlebar { display: flex; gap: 5px; height: 12px; background: #fff; overflow: hidden; line-height: 4px; font-size: 12.500px; }
.tlogo { width: 16px; height: 16px; margin-top: -7px; }
.menubar { display: flex; gap: 13px; height: 20px; padding-left: 5px; background: #fff; line-height: 22px; }
.after-gap { margin-right: 15px; }
.toolbar { display: flex; align-items: center; height: 30px; margin-bottom: 2px; background: #f3f6fc; }
.ti { width: 16px; height: 16px; margin-left: 7px; }
.ta { width: 8px; height: 8px; margin-left: 7px; }
.ta + .ti { margin-left: 9px; }
.tg { width: 2px; height: 16px; margin-left: 7px; background: repeating-linear-gradient(#9a9a9a 0 2px, transparent 2px 5px); }
.toolbar > .tg:first-child { margin-left: 0; }
.tg + .ti { margin-left: 5px; }
.ts { width: 1px; height: 18px; margin-left: 5px; background: #a0a0a0; }
.ts + .ti { margin-left: 10px; }

/* workspace */
.workspace { display: flex; gap: 4px; height: 823px; padding-left: 1px; overflow: hidden; }
.leftcol { display: flex; flex-direction: column; gap: 4px; width: 417px; flex: none; }
.rightcol { display: flex; flex-direction: column; gap: 4px; flex: none; width: 1400px; }
.toprow { display: flex; gap: 4px; height: 635px; flex: none; }
.botrow { display: flex; gap: 5px; height: 200px; flex: none; }

.panel { display: flex; flex-direction: column; background: #fff; border: 1px solid #0f9bec; border-radius: 9px; overflow: hidden; flex: none; }
.green { border-color: #3fd253; }
.explorer { height: 467px; }
.assistant { height: 400px; }
.editor { width: 1191px; }
.outline { width: 200px; }
.console { width: 761px; }
.terminal { width: 600px; }

.phead { display: flex; align-items: stretch; height: 26px; flex: none; background: linear-gradient(#fff, #dce8fb); border-bottom: 1px solid #0f9bec; }
.green .phead { border-color: #3fd253; }
.ptab { display: flex; align-items: center; height: 26px; margin-bottom: -1px; background: #fff; border-right: 1px solid #0f9bec; border-top-right-radius: 9px; flex: none; }
.green .ptab { border-color: #3fd253; }
.ptab .ic { width: 16px; height: 16px; }
.ptab span, .itab span { padding-top: 2px; }
.cl { width: 12px; height: 12px; }
.itab { display: flex; align-items: center; flex: none; }

.tab-explorer { width: 99px; padding-left: 4px; }
.tab-explorer span { margin: 0 0 0 5px; width: 55px; }
.tab-assistant { width: 101px; padding-left: 5px; }
.tab-assistant span { margin-left: 3px; width: 58px; }
.tab-ultra { width: 89px; padding-left: 4px; }
.tab-ultra span { margin-left: 4px; width: 47px; }
.tab-outline { width: 90px; padding-left: 4px; }
.tab-outline span { margin-left: 5px; width: 46px; }
.tab-console { width: 96px; padding-left: 5px; }
.tab-console span { margin-left: 2px; width: 52px; }
.tab-problems { margin-left: 3px; width: 85px; }
.tab-problems span { margin-left: 4px; }
.tab-log { width: 78px; }
.tab-log span { margin-left: 2px; }
.tab-guide span { margin-left: 3px; }
.itab .ic { width: 16px; height: 16px; }
.tab-xsct { width: 111px; padding-left: 3px; }
.tab-xsct span { margin-left: 4px; }
.tab-serial { width: 163px; padding-left: 5px; border-left: 1px solid #0f9bec; border-top-left-radius: 9px; }
.tab-serial span { margin-left: 2px; width: 120px; white-space: nowrap; }

.ptools { display: flex; align-items: center; gap: 7px; margin-left: auto; padding-right: 11px; }
.ptools .ic { width: 16px; height: 16px; }
.menu-dots { margin-left: 3px; }
.toggled { display: flex; align-items: center; justify-content: center; width: 22px; height: 22px; margin: 0 -3px; background: #cfe3f8; border: 1px solid #a8cdf0; }
.ptools-c { gap: 8px; padding-right: 10px; }
.ptools-c .ta { margin-left: -2px; }

.pbody { display: flex; flex: 1; min-height: 0; }

/* trees */
.tree { overflow: hidden; }
.tree-exp { flex: 1; padding: 2px 0 0 5px; }
.tree-asst { padding: 7px 0 0 5px; }
.tree-dom { flex: 1; padding: 2px 0 0 4px; border: 1px solid #a0a0a0; border-bottom: 0; margin-top: 5px; }
.row { display: flex; align-items: center; height: 20px; white-space: nowrap; }
.l1 { padding-left: 16px; }
.l2 { padding-left: 32px; }
.l3 { padding-left: 48px; }
.cv { width: 16px; height: 16px; flex: none; }
.ic { width: 16px; height: 16px; }
.t { margin-left: 5px; }
.t em { font-style: normal; color: #a98f5f; }
.muted { color: #8a8a8a; }
.sel { display: flex; align-items: center; height: 20px; margin-left: -2px; padding: 0 3px 0 2px; background: #d9d9d9; }

/* scrollbars */
.sbar { display: flex; flex-direction: column; width: 16px; flex: none; background: #f0f0f0; }
.sb { width: 16px; height: 17px; }
.thumb { background: #cdcdcd; flex: none; }
.track { flex: 1; }
.sbar-exp { margin: 2px 2px 2px 0; }
.thumb-exp { height: 290px; }
.sbar-form { margin: 1px 3px 0 16px; }
.thumb-form { height: 523px; }

/* editor */
.edbody { display: flex; flex: 1; min-height: 0; }
.sidecol { display: flex; flex-direction: column; width: 288px; flex: none; margin-left: 7px; padding-top: 6px; }
.filter { display: flex; align-items: center; height: 26px; flex: none; padding: 1px; background: #f0f0f0; border: 1px solid #bdbdbd; }
.finput { width: 192px; height: 23px; line-height: 21px; padding-left: 3px; background: #fff; border: 1px solid #808080; color: #666; flex: none; }
.fbtns { display: flex; gap: 7px; margin-left: 4px; }
.formcol { display: flex; flex: 1; min-width: 0; }
.form { flex: 1; padding-left: 13px; }
.fhead { height: 47px; margin: 0 0 7px; padding-top: 15px; font-size: 14.500px; line-height: 24px; font-weight: 700; color: #000; border-bottom: 1px solid #a0a0a0; }
.frow { display: flex; align-items: center; gap: 6px; margin-bottom: 5px; }
.frow label { width: 175px; margin-right: -6px; flex: none; }
.r-short { height: 22px; margin-bottom: 6px; }
.r-sel { height: 25px; margin-top: -1px; }
.r-tall { height: 27px; }
.r-desc { height: 74px; }
.r-desc label { align-self: flex-start; line-height: 20px; height: 20px; }
.fld { height: 100%; padding-left: 3px; line-height: 22px; background: #f0f0f0; border: 1px solid #808080; white-space: nowrap; overflow: hidden; }
.fld-s { width: 189px; line-height: 19px; }
.fld-p { line-height: 20px; }
.fld-g { flex: 1; }
.fsel { display: flex; align-items: center; justify-content: space-between; width: 68px; height: 25px; padding: 0 4px 0 3px; background: #e8e8e8; border: 1px solid #b0b0b0; }
.sel-ch { width: 13px; height: 13px; }
.ibtn { display: flex; align-items: center; justify-content: center; width: 26px; height: 25px; margin-left: 1px; flex: none; background: #fff; border: 1px solid #c8c8c8; }
.bi { width: 20px; height: 20px; }
.browse { width: 90px; height: 25px; line-height: 23px; text-align: center; flex: none; background: #fff; border: 1px solid #c8c8c8; }
.edtabs { display: flex; height: 24px; flex: none; background: #dde8fb; border-top: 1px solid #a0a0a0; line-height: 20px; }
.etab { border-right: 1px solid #aaa; height: 22px; white-space: nowrap; }
.etab-on { width: 39px; padding-left: 6px; background: #fff; border-radius: 0 0 5px 0; }
.etab-hw { width: 142px; padding-left: 4px; }

/* outline */
.nooutline { margin: 7px 0 0 7px; line-height: 17px; white-space: nowrap; overflow: hidden; }

/* console + terminal */
.contitle { height: 20px; margin: 0 2px 0 2px; padding-top: 1px; font-size: 12.650px; line-height: 19px; border-bottom: 1px solid #a0a0a0; flex: none; white-space: nowrap; }
.conbody { display: flex; justify-content: flex-end; flex: 1; padding-right: 2px; margin-top: 1px; }
.sbar-con { height: 100%; }
.connected { height: 29px; flex: none; padding: 6px 0 0 6px; font-size: 12.650px; line-height: 20px; color: #8c8c8c; }
.termbox { margin-left: 6px; padding: 1px 0 0 2px; border: 1px solid #a0a0a0; font-size: 12.650px; line-height: 17px; flex: 1; }
.termbox div { white-space: nowrap; }

.watermark { position: absolute; left: 1543px; top: 856px; font: 17.500px/24px "Liberation Sans", "Noto Sans CJK SC", sans-serif; color: #9b9b9b; opacity: .95; white-space: nowrap; }
```
